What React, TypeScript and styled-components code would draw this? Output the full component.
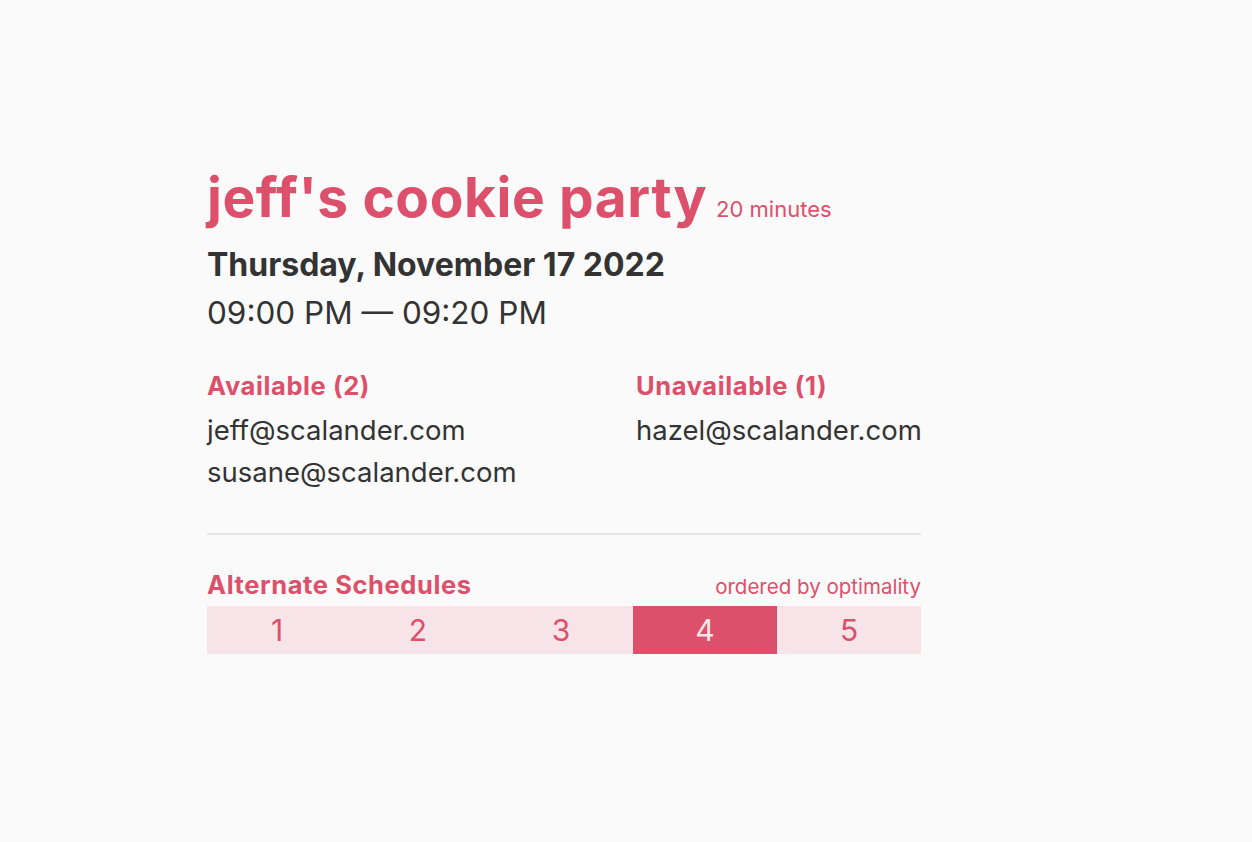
import React from "react";
import styled, { createGlobalStyle } from "styled-components";

const Global = createGlobalStyle`
  html, body { margin: 0; padding: 0; background: #fafafa; }
  body { font-family: Inter, "Noto Sans", sans-serif; color: #333; }
`;

const PINK = "#dd506b";

const Page = styled.main`
  min-height: 842px;
  padding: 165px 0 0 207px;
  box-sizing: border-box;
`;

const Card = styled.section`
  width: 714px;
  display: flex;
  flex-direction: column;
`;

const TitleRow = styled.div`
  display: flex;
  align-items: baseline;
  gap: 9px;
`;

const Title = styled.h1`
  margin: 0;
  font-size: 55px;
  font-weight: 700;
  color: ${PINK};
  letter-spacing: 0.6px;
  line-height: 64px;
`;

const Duration = styled.span`
  font-size: 22px;
  color: ${PINK};
`;

const DateLine = styled.div`
  font-size: 32px;
  font-weight: 700;
  line-height: 48px;
  margin-top: 12px;
  color: #333;
`;

const TimeLine = styled.div`
  font-size: 31.5px;
  font-weight: 400;
  line-height: 48px;
  color: #333;
`;

const Columns = styled.div`
  display: grid;
  grid-template-columns: 429px 1fr;
  margin-top: 32px;
`;

const Column = styled.div`
  display: flex;
  flex-direction: column;
`;

const SectionLabel = styled.h2`
  margin: 0;
  font-size: 25.5px;
  font-weight: 700;
  letter-spacing: 0.6px;
  color: ${PINK};
  line-height: 34px;
`;

const EmailList = styled.div`
  display: flex;
  flex-direction: column;
  margin-top: 6px;
`;

const Email = styled.div`
  font-size: 27.5px;
  line-height: 42px;
  color: #333;
`;

const Divider = styled.hr`
  border: none;
  border-top: 2px solid #e6e6e6;
  margin: 40px 0 0;
  width: 100%;
`;

const AltHeader = styled.div`
  display: flex;
  justify-content: space-between;
  align-items: baseline;
  margin-top: 33px;
`;

const AltNote = styled.span`
  font-size: 20.5px;
  color: ${PINK};
`;

const Bar = styled.div`
  display: grid;
  grid-template-columns: 140px 142px 144px 144px 144px;
  height: 48px;
  margin-top: 4px;
`;

const Cell = styled.button<{ $active?: boolean }>`
  border: none;
  margin: 0;
  padding: 0;
  font-family: Inter, "Noto Sans", sans-serif;
  font-size: 30px;
  background: ${(p) => (p.$active ? PINK : "#f7e4e8")};
  color: ${(p) => (p.$active ? "#f7e4e8" : PINK)};
  display: flex;
  align-items: center;
  justify-content: center;
  cursor: pointer;
`;

export default function App() {
  return (
    <>
      <Global />
      <Page>
        <Card>
          <TitleRow>
            <Title>jeff's cookie party</Title>
            <Duration>20 minutes</Duration>
          </TitleRow>
          <DateLine>Thursday, November 17 2022</DateLine>
          <TimeLine>09:00 PM — 09:20 PM</TimeLine>
          <Columns>
            <Column>
              <SectionLabel>Available (2)</SectionLabel>
              <EmailList>
                <Email>jeff@scalander.com</Email>
                <Email>susane@scalander.com</Email>
              </EmailList>
            </Column>
            <Column>
              <SectionLabel>Unavailable (1)</SectionLabel>
              <EmailList>
                <Email>hazel@scalander.com</Email>
              </EmailList>
            </Column>
          </Columns>
          <Divider />
          <AltHeader>
            <SectionLabel>Alternate Schedules</SectionLabel>
            <AltNote>ordered by optimality</AltNote>
          </AltHeader>
          <Bar>
            {[1, 2, 3, 4, 5].map((n) => (
              <Cell key={n} $active={n === 4}>
                {n}
              </Cell>
            ))}
          </Bar>
        </Card>
      </Page>
    </>
  );
}
